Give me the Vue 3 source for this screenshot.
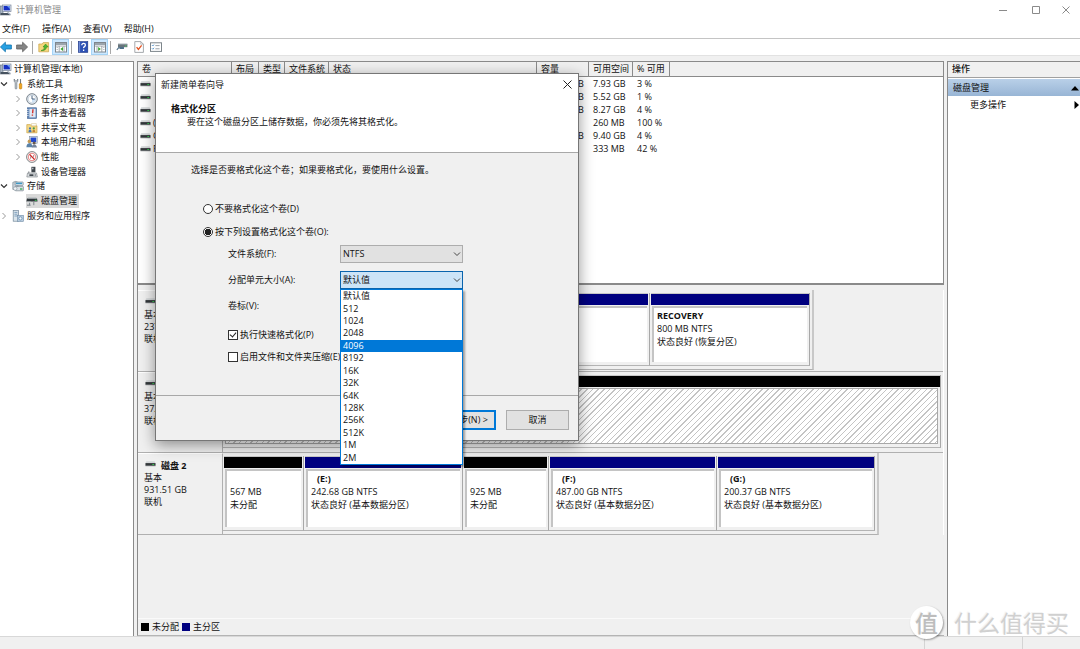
<script setup>
import { ref } from 'vue'

const menus = ['文件(F)', '操作(A)', '查看(V)', '帮助(H)']

const tools = [
  { icon: 'back', label: '后退' },
  { icon: 'forward', label: '前进', sep: true },
  { icon: 'folder-up', label: '向上' },
  { icon: 'pane-left', label: '显示树', on: true, sep: true },
  { icon: 'help', label: '帮助' },
  { icon: 'pane-right', label: '显示操作窗格', on: true, sep: true },
  { icon: 'device', label: '磁盘' },
  { icon: 'doc-check', label: '属性' },
  { icon: 'list', label: '列表' },
]

const tree = [
  { text: '计算机管理(本地)', icon: 'computer', level: 0 },
  { text: '系统工具', icon: 'tools', level: 1, arrow: 'down' },
  { text: '任务计划程序', icon: 'clock', level: 2, arrow: 'right' },
  { text: '事件查看器', icon: 'event', level: 2, arrow: 'right' },
  { text: '共享文件夹', icon: 'share', level: 2, arrow: 'right' },
  { text: '本地用户和组', icon: 'users', level: 2, arrow: 'right' },
  { text: '性能', icon: 'perf', level: 2, arrow: 'right' },
  { text: '设备管理器', icon: 'devmgr', level: 2 },
  { text: '存储', icon: 'storage', level: 1, arrow: 'down' },
  { text: '磁盘管理', icon: 'diskmgr', level: 2, selected: true },
  { text: '服务和应用程序', icon: 'services', level: 1, arrow: 'right' },
]

const columns = [
  { key: 'name', text: '卷' },
  { key: 'layout', text: '布局' },
  { key: 'type', text: '类型' },
  { key: 'fs', text: '文件系统' },
  { key: 'status', text: '状态' },
  { key: 'size', text: '容量' },
  { key: 'free', text: '可用空间' },
  { key: 'pct', text: '% 可用' },
]

const volumes = [
  { name: '', size: '242.68 GB', free: '7.93 GB', pct: '3 %' },
  { name: '', size: '487.00 GB', free: '5.52 GB', pct: '1 %' },
  { name: '', size: '200.37 GB', free: '8.27 GB', pct: '4 %' },
  { name: '(', size: '260 MB', free: '260 MB', pct: '100 %' },
  { name: 'C', size: '237.40 GB', free: '9.40 GB', pct: '4 %' },
  { name: 'R', size: '800 MB', free: '333 MB', pct: '42 %' },
]

const disks = [
  {
    name: '磁盘 0', size: '237 GB', kind: 'd0',
    parts: [
      { w: 427, color: 'navy' },
      { w: 160, color: 'navy', title: 'RECOVERY', size: '800 MB NTFS', status: '状态良好 (恢复分区)' },
    ],
  },
  { name: '磁盘 1', size: '372 GB', kind: 'd1', parts: [{ w: 0, color: 'black', hatch: true }] },
  {
    name: '磁盘 2', size: '931.51 GB', kind: 'd2',
    parts: [
      { w: 81, color: 'black', size: '567 MB', status: '未分配' },
      { w: 159, color: 'navy', title: '(E:)', drive: true, size: '242.68 GB NTFS', status: '状态良好 (基本数据分区)' },
      { w: 86, color: 'black', size: '925 MB', status: '未分配' },
      { w: 168, color: 'navy', title: '(F:)', drive: true, size: '487.00 GB NTFS', status: '状态良好 (基本数据分区)' },
      { w: 158, color: 'navy', title: '(G:)', drive: true, size: '200.37 GB NTFS', status: '状态良好 (基本数据分区)' },
    ],
  },
]

const units = ['默认值', '512', '1024', '2048', '4096', '8192', '16K', '32K', '64K', '128K', '256K', '512K', '1M', '2M']
const hovered = ref('4096')
const unit = ref('默认值')
const fileSystem = ref('NTFS')
const format = ref('yes')
const quick = ref(true)
const compress = ref(false)
const label = ref('')
</script>

<template>
  <svg class="sprite" aria-hidden="true">
    <symbol id="i-computer" viewBox="0 0 12 12">
      <rect x="0" y="2" width="3" height="8" fill="#a9b4c2" stroke="#5d6b7c" stroke-width=".6" />
      <rect x="2.5" y="1" width="8.5" height="6.5" fill="#dfe5ee" stroke="#77839a" stroke-width=".7" />
      <rect x="3.6" y="2" width="6.3" height="4.4" fill="#1731c4" />
      <path d="M7 2h2.9v3z" fill="#6fa0f5" />
      <path d="M1 9h8l1.5 2.3H0z" fill="#46525f" />
      <path d="M7.5 8.2l3.2 2.6" stroke="#aeb8c4" stroke-width="1.4" />
    </symbol>
    <symbol id="i-tools" viewBox="0 0 12 12">
      <path d="M2.2 1v2.6l1 .8v6.2q.8.9 1.6 0V4.4l1-.8V1L4.8 3H3.2z" fill="#d5dbe0" stroke="#68737c" stroke-width=".7" />
      <path d="M8.5 1v5" stroke="#717a82" stroke-width="1.1" />
      <rect x="7.3" y="5.4" width="2.5" height="5.6" rx=".9" fill="#f0a722" stroke="#b97409" stroke-width=".5" />
    </symbol>
    <symbol id="i-clock" viewBox="0 0 12 12">
      <circle cx="6" cy="6" r="5.3" fill="#eef3f8" stroke="#76808a" stroke-width="1" />
      <circle cx="6" cy="6" r="3.9" fill="#fff" stroke="#b8c7d6" stroke-width=".7" />
      <path d="M6 6h3.6A3.7 3.7 0 0 1 6 9.6z" fill="#cfe2f5" />
      <path d="M6 2.6V6h2.8" fill="none" stroke="#36506f" stroke-width=".9" />
    </symbol>
    <symbol id="i-event" viewBox="0 0 12 12">
      <rect x="1.5" y=".8" width="9" height="10.6" fill="#5f84b6" stroke="#395c8e" stroke-width=".6" />
      <rect x="3.4" y="1.8" width="6.2" height="8.6" fill="#dfe9f5" />
      <path d="M7 2.2l-.4 4.1M6.4 7.6v1.2" stroke="#d2322c" stroke-width="1.4" />
      <path d="M1 2.5h1.6M1 4.5h1.6M1 6.5h1.6M1 8.5h1.6" stroke="#e9eef4" stroke-width=".7" />
    </symbol>
    <symbol id="i-share" viewBox="0 0 12 12">
      <path d="M.8 10.8V2.6h3.6l1 1.2h5.6v7z" fill="#f4d886" stroke="#c49a37" stroke-width=".6" />
      <path d="M5.5 1.6h4.8v2.2H5.5z" fill="#fff" stroke="#c3a65e" stroke-width=".4" />
      <circle cx="4" cy="6.4" r="1.1" fill="#3f75b8" />
      <path d="M2.4 10.2q0-2.4 1.6-2.4t1.6 2.4z" fill="#3f75b8" />
      <circle cx="7.8" cy="6.4" r="1.1" fill="#4b9a46" />
      <path d="M6.3 10.2q0-2.4 1.5-2.4t1.5 2.4z" fill="#c3863a" />
    </symbol>
    <symbol id="i-users" viewBox="0 0 12 12">
      <rect x="3.6" y=".6" width="7.6" height="6.6" fill="#d9e2ee" stroke="#7a8aa0" stroke-width=".6" />
      <rect x="4.6" y="1.6" width="5.6" height="4.4" fill="#2147cd" />
      <circle cx="3.4" cy="5.4" r="1.8" fill="#c39a55" />
      <path d="M.4 11.3q.2-4 3-4t3.2 4z" fill="#5a82a8" />
      <circle cx="8.2" cy="7" r="1.5" fill="#6b5a4a" />
      <path d="M5.8 11.4q.2-3 2.4-3t2.8 3z" fill="#75849a" />
    </symbol>
    <symbol id="i-perf" viewBox="0 0 12 12">
      <circle cx="6" cy="6" r="5.4" fill="#fff" stroke="#5d6265" stroke-width=".8" />
      <circle cx="6" cy="6" r="3.8" fill="#fff" stroke="#d85050" stroke-width=".7" />
      <path d="M3.6 3.4l5 5.2" stroke="#cf2222" stroke-width="1.3" />
      <path d="M4.6 7.8V5.4M7.6 6.4V4" stroke="#7b4a4a" stroke-width=".6" />
    </symbol>
    <symbol id="i-devmgr" viewBox="0 0 12 12">
      <path d="M5.4.8h4v5.5h-4z" fill="#3e454b" />
      <path d="M6.2 1.7h1.2v1.6H6.2z" fill="#d7dde1" />
      <path d="M1.5 7h9l.9 4H.8z" fill="#d9dde0" stroke="#7a8085" stroke-width=".6" />
      <path d="M3.4 8.3h4v1.7h-4z" fill="#3f464c" />
      <path d="M2.8 5.4v2M9.2 8v2.2" stroke="#646b71" stroke-width=".8" />
    </symbol>
    <symbol id="i-storage" viewBox="0 0 12 12">
      <path d="M.8 2.4q2.6-2 5.2 0v7H.8z" fill="#c9d4dc" stroke="#707d87" stroke-width=".6" />
      <rect x="3.2" y="2" width="8" height="3.4" rx=".6" fill="#e6edf1" stroke="#68747d" stroke-width=".6" />
      <path d="M4 2.6h6.2v1.6H4z" fill="#4098c4" />
      <rect x="3.2" y="6.4" width="8.2" height="4.4" rx=".6" fill="#d8e0e5" stroke="#68747d" stroke-width=".6" />
      <path d="M8 9h2.4" stroke="#2cab42" stroke-width="1.2" />
      <circle cx="3.2" cy="8.6" r="1.8" fill="#eff4f7" stroke="#75818a" stroke-width=".5" />
    </symbol>
    <symbol id="i-diskmgr" viewBox="0 0 12 12">
      <path d="M1 3.6h10l.6 3H.4z" fill="#2f363b" />
      <path d="M2 3h8.4" stroke="#aab2b7" />
      <path d="M8.8 5.3h1.8" stroke="#3ed35a" />
      <path d="M3.6 6.8v3.4M1 10.2h3.6M7.8 7v3.2" fill="none" stroke="#7c858b" stroke-width="1" />
      <path d="M.8 7.2h4" stroke="#d8dde0" stroke-width="1" />
    </symbol>
    <symbol id="i-services" viewBox="0 0 12 12">
      <rect x="1.2" y=".6" width="5.4" height="10.6" fill="#dbe5ec" stroke="#71879a" stroke-width=".7" />
      <path d="M2.4 2.4h3M2.4 4.2h3M2.4 6h3" stroke="#6b91b4" stroke-width=".8" />
      <rect x="5.4" y="5.4" width="6" height="6" fill="#b9cde0" stroke="#6e8aa5" stroke-width=".6" />
      <circle cx="8.4" cy="8.4" r="1.6" fill="#f1f6fa" stroke="#5882a8" stroke-width=".7" />
    </symbol>
    <symbol id="i-drive" viewBox="0 0 12 6">
      <path d="M1.4 0h9l.9 2H.6z" fill="#d5d8da" />
      <rect x=".5" y="2" width="11" height="3" fill="#33383b" />
      <rect x="8" y="3" width="2" height="1" fill="#35d04f" />
      <path d="M.5 5.4h11" stroke="#b5b8ba" stroke-width=".6" />
    </symbol>
    <symbol id="i-back" viewBox="0 0 12 12">
      <path d="M.4 6L5.4 1.2V4h6v4h-6v2.8z" fill="#27a0e2" stroke="#1373ad" stroke-width=".8" />
    </symbol>
    <symbol id="i-forward" viewBox="0 0 12 12">
      <path d="M11.6 6l-5-4.8V4h-6v4h6v2.8z" fill="#858585" stroke="#636363" stroke-width=".8" />
    </symbol>
    <symbol id="i-folder-up" viewBox="0 0 12 12">
      <path d="M.8 10.8V3h3.4l1-1.4h5.4v9.2z" fill="#f5d77d" stroke="#c8a248" stroke-width=".7" />
      <path d="M3 9.6q3.4-.6 3.6-3.6H5l2.6-3L10.2 6H8.6q-.6 4-5.6 3.6z" fill="#4fb832" stroke="#2d831a" stroke-width=".5" />
    </symbol>
    <symbol id="i-pane-left" viewBox="0 0 12 12">
      <rect x=".5" y="1.5" width="11" height="9.5" fill="#fff" stroke="#7e868d" />
      <rect x="1" y="2" width="10" height="2.2" fill="#9ba5ad" />
      <path d="M.8 5.2h10.4" stroke="#8d969d" stroke-width=".6" />
      <path d="M4.2 5v6M9 5v6" stroke="#8d969d" stroke-width=".8" />
      <path d="M1.5 6.5h1.5M1.5 8.5h1.5" stroke="#acb4ba" stroke-width=".8" />
      <path d="M8 6v4L5.4 8z" fill="#35a52b" />
    </symbol>
    <symbol id="i-pane-right" viewBox="0 0 12 12">
      <rect x=".5" y="1.5" width="11" height="9.5" fill="#fff" stroke="#7e868d" />
      <rect x="1" y="2" width="10" height="2.2" fill="#9ba5ad" />
      <path d="M.8 5.2h10.4" stroke="#8d969d" stroke-width=".6" />
      <path d="M3 5v6M7.8 5v6" stroke="#8d969d" stroke-width=".8" />
      <path d="M9 6.5h1.5M9 8.5h1.5" stroke="#acb4ba" stroke-width=".8" />
      <path d="M4.2 6v4l2.6-2z" fill="#35a52b" />
    </symbol>
    <symbol id="i-help" viewBox="0 0 12 12">
      <rect x="1.4" y=".6" width="9.4" height="10.8" fill="#2c50b4" stroke="#1b3483" stroke-width=".6" />
      <path d="M2.6.8v10.4" stroke="#89a2e0" stroke-width=".8" />
      <path d="M4.8 4.2q0-1.8 1.8-1.8t1.8 1.6q0 1-1 1.6t-.8 1.6M6.6 8.5v1.4" fill="none" stroke="#fff" stroke-width="1.3" />
    </symbol>
    <symbol id="i-device" viewBox="0 0 12 12">
      <path d="M2 3h9.4v3.2H2z" fill="#69747b" />
      <path d="M2 3h9.4" stroke="#a8b2b8" />
      <path d="M9 5h1.4" stroke="#49d463" />
      <path d="M.8 8.8l2.4-2.6M4 6.5h3.4v1H4z" stroke="#4d6f88" stroke-width="1.1" fill="#cfd7dc" />
    </symbol>
    <symbol id="i-doc-check" viewBox="0 0 12 12">
      <path d="M1.8.6h6l2.6 2.6v8.2H1.8z" fill="#fff" stroke="#8f9498" stroke-width=".8" />
      <path d="M7.8.6v2.6h2.6" fill="none" stroke="#8f9498" stroke-width=".6" />
      <path d="M3.6 6.2l1.8 2.2 3.2-4" fill="none" stroke="#e2501f" stroke-width="1.3" />
    </symbol>
    <symbol id="i-list" viewBox="0 0 12 12">
      <rect x=".5" y="1.8" width="11" height="8.6" fill="#fff" stroke="#7d858b" />
      <path d="M2 4.2l.8.8 1.2-1.4M2 7.4l.8.8L4 6.8" fill="none" stroke="#2f7fc4" stroke-width=".8" />
      <path d="M5.4 4.6h4.2M5.4 7.8h4.2" stroke="#8d969d" stroke-width=".9" />
    </symbol>
  </svg>

  <div class="window">
    <header class="titlebar">
      <svg class="icon"><use href="#i-computer" /></svg>
      <span class="title">计算机管理</span>
      <div class="winctl">
        <button aria-label="最小化"><svg viewBox="0 0 8 8"><path d="M0 4.5h8" /></svg></button>
        <button aria-label="最大化"><svg viewBox="0 0 8 8"><path d="M.5.5h7v7h-7z" /></svg></button>
        <button aria-label="关闭"><svg viewBox="0 0 8 8"><path d="M.5.5l7 7M7.5.5l-7 7" /></svg></button>
      </div>
    </header>
    <nav class="menubar">
      <button v-for="m in menus" :key="m">{{ m }}</button>
    </nav>
    <div class="toolbar">
      <template v-for="t in tools" :key="t.icon">
        <button :class="{ on: t.on }" :aria-label="t.label"><svg class="icon"><use :href="'#i-' + t.icon" /></svg></button>
        <i v-if="t.sep" class="sep"></i>
      </template>
    </div>

    <main class="panes">
      <aside class="tree">
        <ul>
          <li v-for="n in tree" :key="n.text" :class="'lv' + n.level">
            <svg v-if="n.level" class="arrow" :class="n.arrow" viewBox="0 0 8 8">
              <path v-if="n.arrow === 'down'" d="M1 2.5l3 3 3-3" />
              <path v-else-if="n.arrow === 'right'" d="M2.5 1l3 3-3 3" />
            </svg>
            <span class="node" :class="{ selected: n.selected }">
              <svg class="icon"><use :href="'#i-' + n.icon" /></svg>{{ n.text }}
            </span>
          </li>
        </ul>
      </aside>

      <section class="center">
        <div class="volumes">
          <table>
            <colgroup>
              <col v-for="c in columns" :key="c.key" :class="'c-' + c.key" />
              <col />
            </colgroup>
            <thead>
              <tr><th v-for="c in columns" :key="c.key">{{ c.text }}</th><th class="rest"></th></tr>
            </thead>
            <tbody>
              <tr v-for="(v, i) in volumes" :key="i">
                <td class="vname"><svg class="drive"><use href="#i-drive" /></svg>{{ v.name }}</td>
                <td></td><td></td><td></td><td></td>
                <td>{{ v.size }}</td><td>{{ v.free }}</td><td>{{ v.pct }}</td><td></td>
              </tr>
            </tbody>
          </table>
        </div>

        <div class="disks">
          <div v-for="d in disks" :key="d.name" class="disk">
            <div class="info">
              <b><svg class="drive"><use href="#i-drive" /></svg>{{ d.name }}</b>
              <span>基本</span><span>{{ d.size }}</span><span>联机</span>
            </div>
            <div class="parts" :class="d.kind">
              <div v-for="(p, i) in d.parts" :key="i" class="part" :style="p.w ? { width: p.w + 'px' } : {}">
                <div class="bar" :class="p.color"></div>
                <div class="body" :class="{ hatch: p.hatch }">
                  <b :class="{ drv: p.drive }">{{ p.title }}</b>
                  <span>{{ p.size }}</span>
                  <span>{{ p.status }}</span>
                </div>
              </div>
            </div>
          </div>
        </div>

        <div class="legend">
          <i class="black"></i><span>未分配</span><i class="navy"></i><span>主分区</span>
        </div>
      </section>

      <aside class="actions">
        <h2>操作</h2>
        <button class="group">磁盘管理<svg viewBox="0 0 8 8"><path d="M0 6.5L4 2l4 4.5z" /></svg></button>
        <button class="more">更多操作<svg viewBox="0 0 8 8"><path d="M2.5 0L7 4 2.5 8z" /></svg></button>
      </aside>
    </main>
    <footer class="status"><i></i><i></i></footer>

    <section class="dialog" role="dialog" aria-labelledby="dlg-title">
      <div class="dlg-head">
        <div class="dlg-title">
          <span id="dlg-title">新建简单卷向导</span>
          <button aria-label="关闭"><svg viewBox="0 0 9 9"><path d="M.5.5l8 8M8.5.5l-8 8" /></svg></button>
        </div>
        <h1>格式化分区</h1>
        <p>要在这个磁盘分区上储存数据，你必须先将其格式化。</p>
      </div>
      <form class="dlg-body" @submit.prevent>
        <p>选择是否要格式化这个卷；如果要格式化，要使用什么设置。</p>
        <div class="radios">
          <label><input v-model="format" type="radio" name="format" value="no" />不要格式化这个卷(D)</label>
          <label><input v-model="format" type="radio" name="format" value="yes" />按下列设置格式化这个卷(O):</label>
        </div>
        <div class="fields">
          <label for="fs">文件系统(F):</label>
          <div class="combo">
            <select id="fs" v-model="fileSystem"><option>NTFS</option></select>
            <svg viewBox="0 0 8 8"><path d="M1 2.5l3 3 3-3" /></svg>
          </div>
          <label for="unit">分配单元大小(A):</label>
          <div class="combo open">
            <select id="unit" v-model="unit"><option v-for="u in units" :key="u">{{ u }}</option></select>
            <svg viewBox="0 0 8 8"><path d="M1 2.5l3 3 3-3" /></svg>
            <ul class="dropdown" role="listbox">
              <li v-for="u in units" :key="u" role="option" :class="{ hot: u === hovered }" @mouseenter="hovered = u" @click="unit = u">{{ u }}</li>
            </ul>
          </div>
          <label for="vol">卷标(V):</label>
          <input id="vol" v-model="label" type="text" />
        </div>
        <div class="checks">
          <label><input v-model="quick" type="checkbox" />执行快速格式化(P)</label>
          <label><input v-model="compress" type="checkbox" />启用文件和文件夹压缩(E)</label>
        </div>
      </form>
      <div class="dlg-foot">
        <button>&lt; 上一步(B)</button>
        <button class="primary">下一步(N) &gt;</button>
        <button class="cancel">取消</button>
      </div>
    </section>

    <div class="watermark"><span class="seal">值</span><span>什么值得买</span></div>
  </div>
</template>

<style>
body { margin: 0; background: #f0f0f0; }
</style>

<style scoped>
* { box-sizing: border-box; }
.sprite { position: absolute; width: 0; height: 0; }
.window {
  position: relative;
  display: flex;
  flex-direction: column;
  min-height: 100vh;
  overflow: hidden;
  background: #f0f0f0;
  color: #111;
  font: 9px/12px "Open Sans", "Noto Sans CJK SC", sans-serif;
}
button, input, select { font: inherit; color: inherit; margin: 0; padding: 0; border: 0; background: none; border-radius: 0; }
ul { list-style: none; margin: 0; padding: 0; }
h1, h2, p { margin: 0; font-size: 9px; }
.icon { width: 12px; height: 12px; flex: none; display: block; }
.drive { width: 11px; height: 6px; flex: none; display: block; }
.black { background: #000; }
.navy { background: #000080; }

.titlebar { display: flex; align-items: center; gap: 4px; height: 20px; background: #fff; color: #8a8a8a; }
.winctl { display: flex; margin-left: auto; }
.winctl button { width: 33px; height: 20px; display: grid; place-items: center; }
.winctl button:last-child { width: 28px; }
.winctl svg { width: 8px; height: 8px; fill: none; stroke: #8a8a8a; stroke-width: 1; }
.menubar { display: flex; gap: 12px; height: 19px; padding-left: 2px; background: #fff; border-bottom: 1px solid #c4c4c4; }
.toolbar { display: flex; align-items: center; height: 17px; background: #fff; border-bottom: 1px solid #e2e2e2; }
.toolbar button { width: 17px; height: 16px; display: grid; place-items: center; }
.toolbar button:first-child { width: 13px; justify-items: start; }
.toolbar button.on { background: #cce8ff; outline: 1px solid #a5d3f5; outline-offset: -1px; }
.sep { width: 1px; height: 13px; background: #a8a8a8; margin: 0 2px; }

.panes { flex: 1; display: grid; grid-template-columns: 134px 1fr 133px; gap: 3px; padding-top: 5px; }
.tree { background: #fff; border-top: 1px solid #8a8a8a; border-right: 1px solid #8a8a8a; }
.tree ul { display: grid; grid-auto-rows: 1fr; height: 161px; }
.tree li { display: flex; align-items: center; }
.lv2 { padding-left: 14px; }
.arrow { width: 8px; height: 8px; flex: none; margin-right: 4px; fill: none; stroke: #9a9a9a; stroke-width: 1; }
.arrow.down { stroke: #333; stroke-width: 1.2; }
.node { display: flex; align-items: center; gap: 3px; white-space: nowrap; padding-right: 2px; }
.lv0 .node { gap: 2px; }
.node.selected { background: #d9d9d9; height: 14px; }

.center { display: flex; flex-direction: column; min-width: 0; border-top: 1px solid #8a8a8a; border-left: 1px solid #8a8a8a; border-bottom: 1px solid #b4b4b4; }
.volumes { height: 223px; background: #fff; border-bottom: 2px solid #8a8a8a; border-right: 1px solid #8a8a8a; }
table { width: 100%; table-layout: fixed; border-collapse: separate; border-spacing: 0; }
.c-name { width: 94px; }
.c-layout { width: 27px; }
.c-type { width: 26px; }
.c-fs { width: 44px; }
.c-status { width: 208px; }
.c-size { width: 52px; }
.c-free { width: 44px; }
.c-pct { width: 37px; }
th, td { padding: 0 0 0 4px; text-align: left; white-space: nowrap; font-weight: 400; }
th { height: 15px; background: #f0f0f0; border-right: 1px solid #8a8a8a; border-bottom: 1px solid #8a8a8a; }
th.rest { border-right: 0; }
td { height: 13px; }
.vname { display: flex; align-items: center; gap: 2px; padding-left: 2px; }

.disks { margin-top: 5px; height: 245px; display: grid; grid-template-rows: repeat(3, 1fr); border-right: 1px solid #fff; }
.disk { display: flex; border-bottom: 1px solid #b0b0b0; }
.disk:last-child { border-bottom: 0; }
.info { width: 85px; flex: none; display: flex; flex-direction: column; padding: 5px 0 0 6px; border-right: 1px solid #b0b0b0; border-top: 1px solid #fff; }
.info span { line-height: 12px; }
.info b { display: flex; align-items: center; gap: 5px; padding-left: 1px; line-height: 13px; }
.disk:last-child .info { border-bottom: 1px solid #b0b0b0; }
.info .drive { margin-bottom: 3px; }
.parts { display: flex; padding: 3px 2px 3px 0; border-right: 2px solid #c8c8c8; border-bottom: 1px solid #b0b0b0; margin-bottom: 1px; }
.disk:last-child .parts { margin-bottom: 0; }
.d1 { flex: 1; border-right: 0; border-bottom: 0; }
.d1 .part { flex: 1; }
.part { display: flex; flex-direction: column; border-right: 1px solid #a8a8a8; border-bottom: 1px solid #b4b4b4; }
.bar { height: 12px; flex: none; margin: 0 1px; border-top: 1px solid #c8c8c8; }
.part:last-child .bar { margin-right: 0; }
.body { flex: 1; margin: 1px 2px 3px 2px; padding: 2px 0 0 3px; display: flex; flex-direction: column; background: #fff; border-top: 2px solid #c4c4c4; border-left: 2px solid #c4c4c4; white-space: nowrap; }
.body b { line-height: 12px; height: 12px; }
.body span { line-height: 13px; }
.body b.drv { padding-left: 6px; }
.body.hatch { border: 1px solid #a8a8a8; background: repeating-linear-gradient(135deg, #fff 0 3px, #c4c4c4 3px 4px); }

.legend { margin-top: auto; height: 17px; display: flex; align-items: center; gap: 3px; padding-left: 3px; border-top: 1px solid #fafafa; }
.legend i { width: 8px; height: 8px; }

.actions { background: #fff; border-top: 1px solid #8a8a8a; border-left: 1px solid #8a8a8a; display: flex; flex-direction: column; }
.actions h2 { height: 16px; line-height: 14px; padding-left: 4px; background: #f0f0f0; border-bottom: 1px solid #a0a0a0; font-weight: 500; }
.actions button { display: flex; align-items: center; justify-content: space-between; height: 17px; padding-left: 5px; padding-right: 1px; }
.actions svg { width: 8px; height: 8px; }
.actions .group { margin-top: 1px; background: linear-gradient(#b9d0e8, #98b5d5); }
.actions .more { padding-left: 22px; padding-right: 0; }

.status { height: 13px; display: flex; justify-content: flex-end; border-top: 1px solid #d8d8d8; background: #f0f0f0; }
.status i { width: 98px; border-left: 1px solid #d4d4d4; }
.status i:last-child { width: 58px; }

.dialog { position: absolute; left: 155px; top: 73px; width: 424px; border: 1px solid #767676; background: #f0f0f0; box-shadow: 0 4px 14px rgba(0, 0, 0, .42); }
.dlg-head { height: 79px; background: #fff; border-bottom: 1px solid #a8a8a8; }
.dlg-title { display: flex; justify-content: space-between; align-items: center; height: 21px; padding-left: 5px; }
.dlg-title button { width: 22px; height: 20px; display: grid; place-items: center; }
.dlg-title svg { width: 9px; height: 9px; fill: none; stroke: #222; stroke-width: 1; }
.dlg-head h1 { margin: 8px 0 0 15px; font-weight: 700; }
.dlg-head p { padding-left: 31px; line-height: 13px; }
.dlg-body { padding: 11px 0 27px 35px; border-bottom: 1px solid #a8a8a8; }
.dlg-body label { display: flex; align-items: center; }
.radios { margin-top: 21px; padding-left: 12px; }
.radios label { height: 23px; gap: 2px; }
.radios input { appearance: none; width: 10px; height: 10px; border: 1px solid #333; border-radius: 50%; background: #fff; }
.radios input:checked { background: radial-gradient(circle, #222 0 3px, #fff 3px); }
.fields { margin: 2px 0 0 37px; display: grid; grid-template-columns: 112px 123px; grid-auto-rows: 18px; row-gap: 8px; }
.fields input { border: 1px solid #7a7a7a; background: #fff; }
.combo { position: relative; }
.combo select { appearance: none; display: block; width: 100%; height: 18px; padding-left: 2px; background: #e1e1e1; border: 1px solid #adadad; }
.combo > svg { position: absolute; right: 2px; top: 5px; width: 8px; height: 8px; fill: none; stroke: #444; pointer-events: none; }
.combo.open select { background: #cce4f7; border-color: #0a64ad; }
.dropdown { position: absolute; z-index: 2; top: 18px; left: 0; width: 100%; height: 176px; display: grid; grid-auto-rows: 1fr; background: #fff; border: 1px solid #0078d7; box-shadow: 2px 2px 2px rgba(0, 0, 0, .35); }
.dropdown li { display: flex; align-items: center; padding-left: 2px; }
.dropdown .hot { background: #0078d7; color: #fff; }
.checks { margin: 9px 0 0 37px; }
.checks label { height: 22px; gap: 2px; }
.checks input { appearance: none; width: 10px; height: 10px; border: 1px solid #333; background: #fff; position: relative; }
.checks input:checked::after { content: ""; position: absolute; left: 2px; top: 0; width: 3px; height: 5px; border: solid #222; border-width: 0 1px 1px 0; transform: rotate(40deg); }
.dlg-foot { display: flex; justify-content: flex-end; padding: 14px 9px 10px 0; }
.dlg-foot button { width: 63px; height: 20px; background: #e1e1e1; border: 1px solid #adadad; }
.dlg-foot .primary { outline: 2px solid #0078d7; outline-offset: -2px; }
.dlg-foot .cancel { margin-left: 10px; }

.watermark { position: absolute; right: 11px; bottom: 10px; display: flex; align-items: center; gap: 11px; color: #d0d0d0; font: 23px/34px "Noto Sans CJK SC", sans-serif; text-shadow: -1px -1px 0 #f4f4f4; }
.seal { width: 33px; height: 33px; border-radius: 50%; background: #fff; text-align: center; line-height: 32px; color: #bdbdbd; font-weight: 500; font-size: 23px; box-shadow: 1px 1px 2px rgba(0, 0, 0, .35); }
</style>
